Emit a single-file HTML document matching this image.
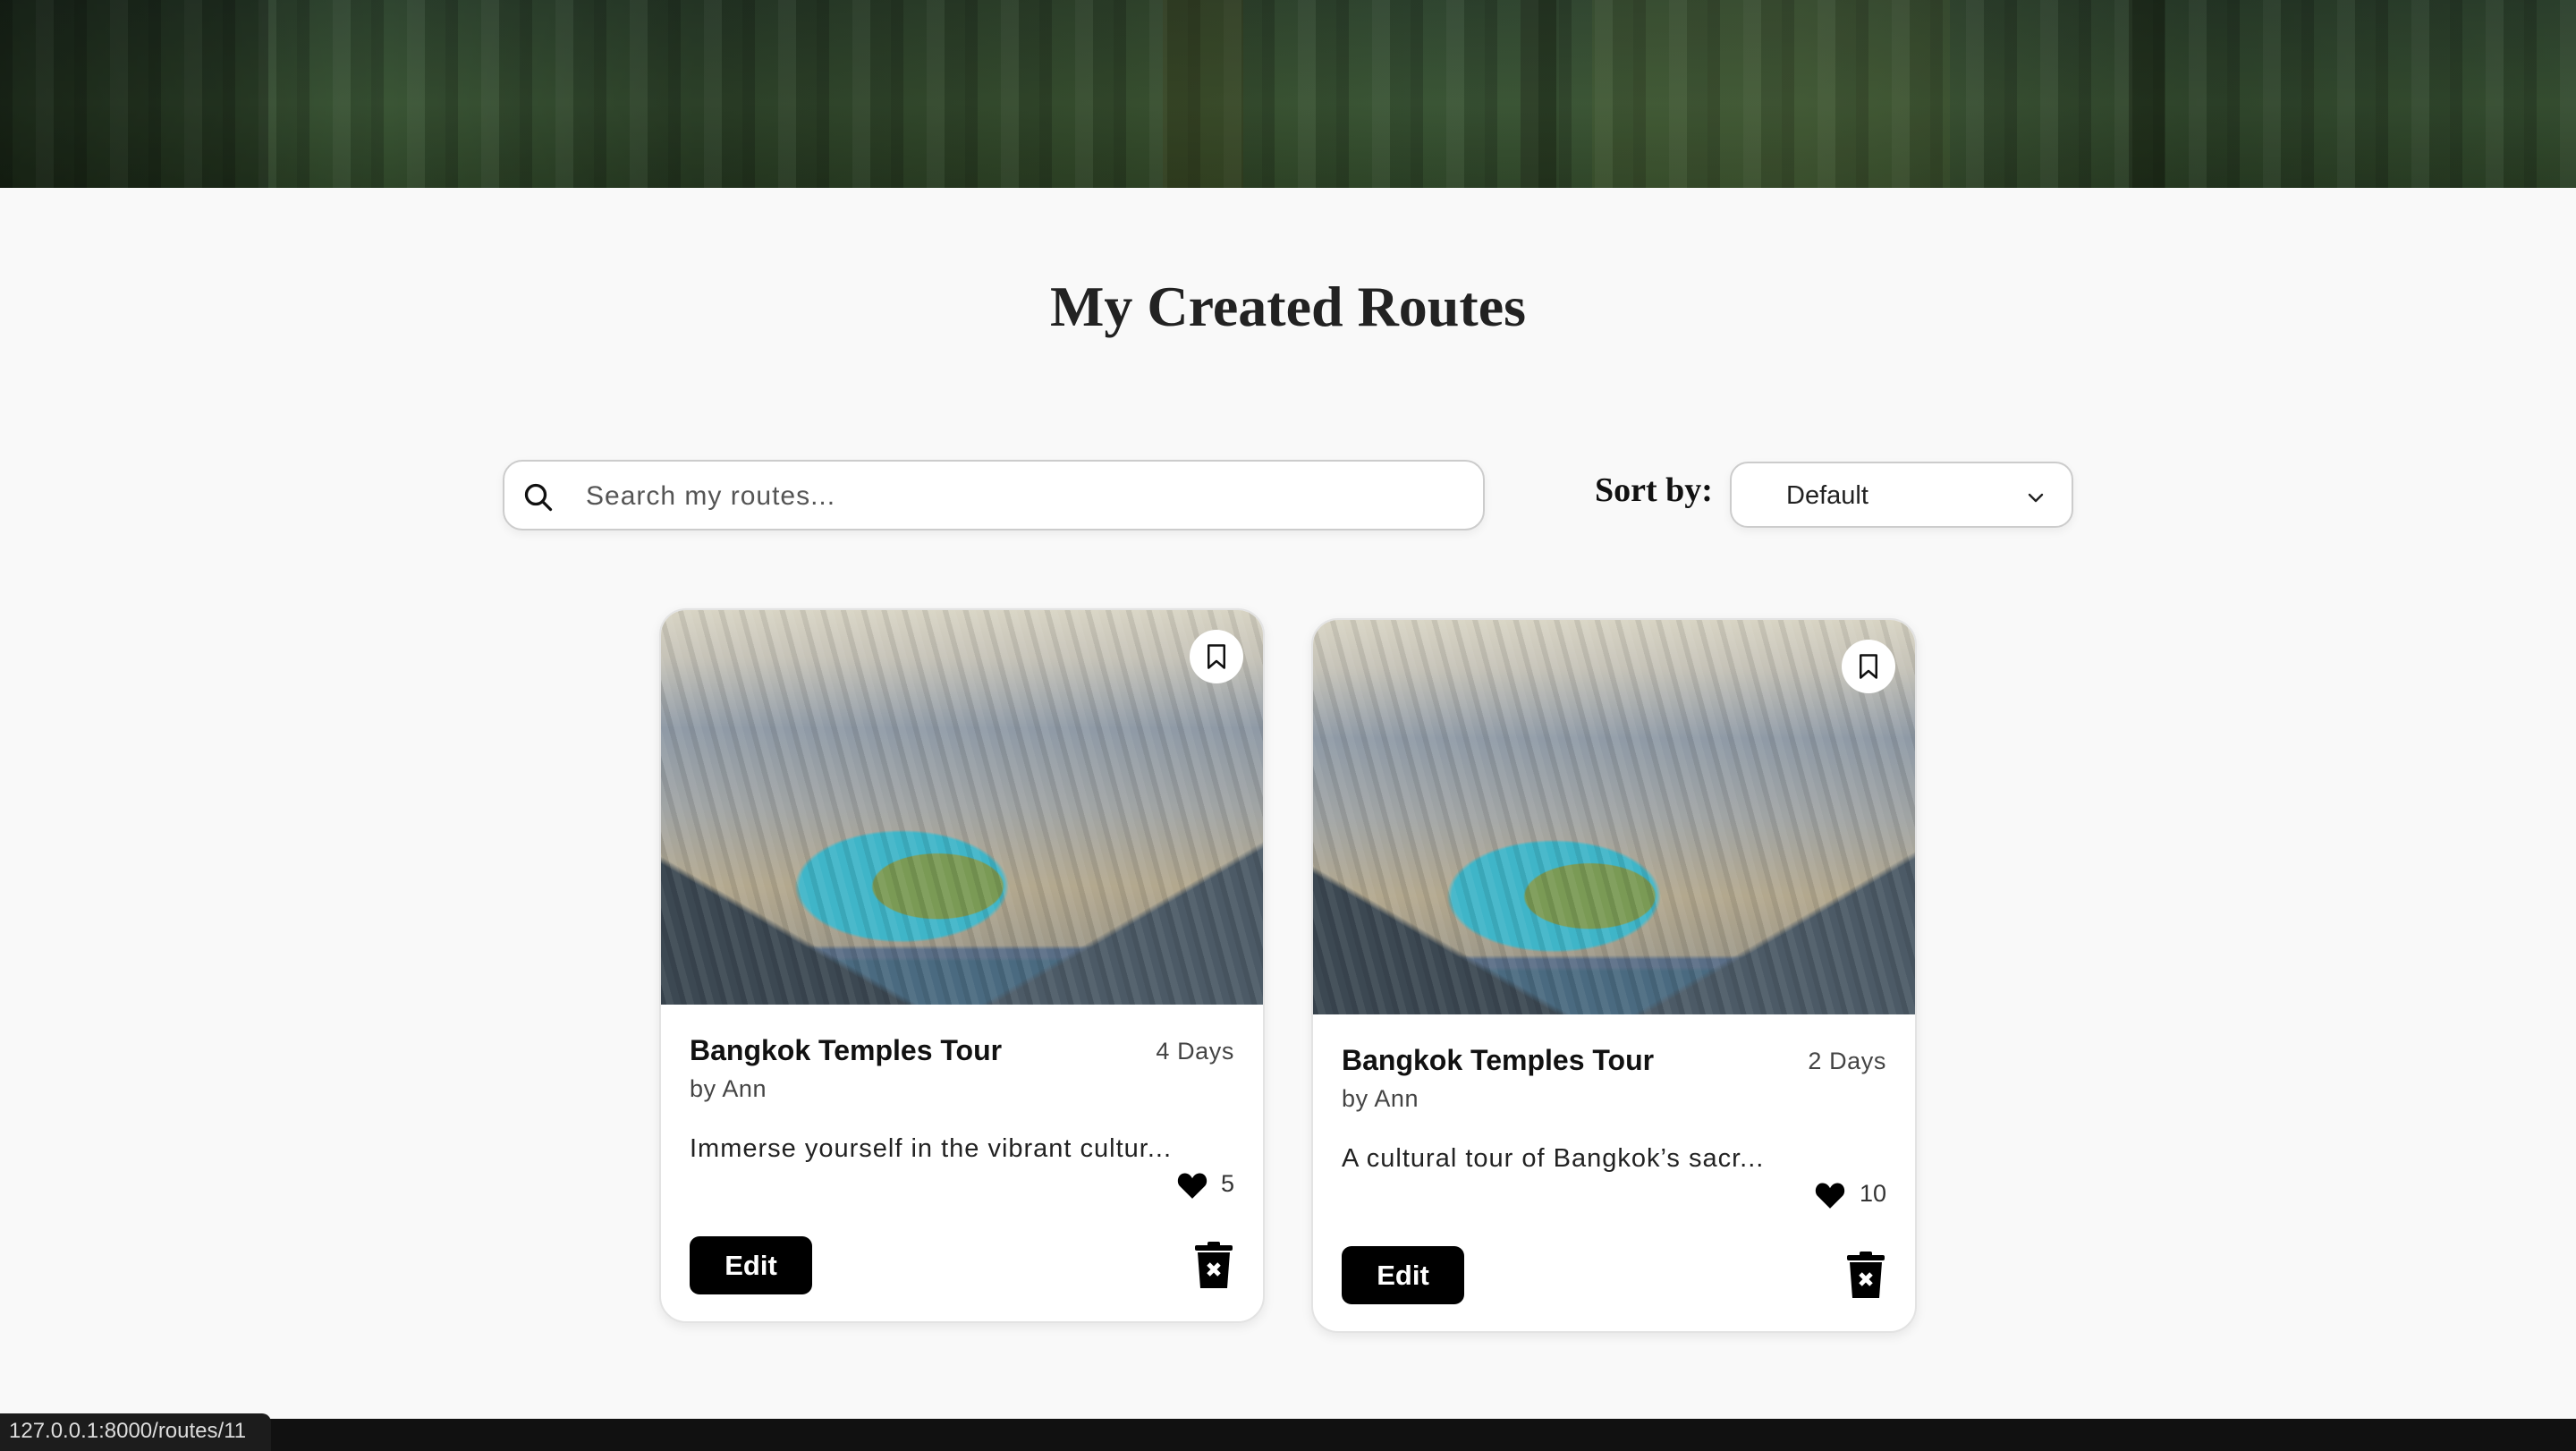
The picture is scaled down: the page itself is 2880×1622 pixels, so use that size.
<!DOCTYPE html>
<html><head><meta charset="utf-8"><style>
*{box-sizing:border-box;margin:0;padding:0}
body{width:2880px;height:1622px;background:#f9f9f9;position:relative;overflow:hidden;font-family:"Liberation Sans",sans-serif;color:#111}
.hero{position:absolute;left:0;top:0;width:2880px;height:210px;
background:
repeating-linear-gradient(90deg,rgba(0,0,0,.18) 0 14px,rgba(0,0,0,0) 14px 40px,rgba(255,255,255,.04) 40px 60px,rgba(0,0,0,.1) 60px 83px),
linear-gradient(90deg,rgba(0,0,0,.35) 0%,rgba(0,0,0,0) 15%,rgba(0,0,0,.25) 27%,rgba(40,50,20,.2) 45%,rgba(0,0,0,0) 55%,rgba(80,90,60,.15) 70%,rgba(0,0,0,.2) 85%,rgba(0,0,0,.1) 100%),
linear-gradient(180deg,#2f4530 0%,#3a5535 55%,#2e4528 100%);}
.hero i{position:absolute;top:0;height:210px;display:block}
h1{position:absolute;left:0;width:2880px;top:306px;text-align:center;font-family:"Liberation Serif",serif;font-weight:bold;font-size:64px;color:#222}
.search{position:absolute;left:562px;top:514px;width:1098px;height:79px;background:#fff;border:2px solid #ccc;border-radius:22px;box-shadow:0 4px 10px rgba(0,0,0,.06)}
.search span{position:absolute;left:91px;top:22px;font-size:30px;color:#555;letter-spacing:1px}
.sortl{position:absolute;left:1783px;top:526px;font-family:"Liberation Serif",serif;font-weight:bold;font-size:38px;color:#111}
.sel{position:absolute;left:1934px;top:516px;width:384px;height:74px;background:#fff;border:2px solid #ccc;border-radius:20px;box-shadow:0 4px 10px rgba(0,0,0,.06)}
.sel span{position:absolute;left:61px;top:20px;font-size:29px;color:#222}
.card{position:absolute;width:677px;height:799px;background:#fff;border:2px solid #e3e3e3;border-radius:30px;overflow:hidden;box-shadow:0 4px 12px rgba(0,0,0,.08)}
.img{position:absolute;left:0;top:0;width:100%;height:441px;
background:
repeating-linear-gradient(75deg,rgba(0,0,0,.08) 0 6px,rgba(255,255,255,.06) 6px 14px,rgba(0,0,0,0) 14px 22px),
radial-gradient(ellipse 120px 60px at 46% 70%,#7a9a55 0 60%,transparent 62%),
radial-gradient(ellipse 190px 100px at 40% 70%,#3fb5c8 0 60%,transparent 63%),
linear-gradient(150deg,transparent 0 78%,#4c5a66 79% 100%),
linear-gradient(210deg,transparent 0 80%,#3c4852 81% 100%),
linear-gradient(180deg,transparent 0 85%,#5a6e86 86% 88%,#4a6a80 89% 100%),
linear-gradient(180deg,#d8d4c4 0%,#c6c3b8 12%,#8f9aa6 30%,#a0a4a4 50%,#b3a88e 70%,#8c8c86 100%);}
.bm{position:absolute;right:22px;top:22px;width:60px;height:60px;border-radius:50%;background:#fff}
.title{position:absolute;left:32px;font-size:32px;font-weight:bold;color:#111}
.days{position:absolute;right:32px;font-size:27px;color:#444;letter-spacing:.6px}
.by{position:absolute;left:32px;font-size:27px;color:#444;letter-spacing:.6px}
.desc{position:absolute;left:32px;font-size:29px;color:#222;letter-spacing:1px}
.likes{position:absolute;right:32px;font-size:27px;color:#333}
.edit{position:absolute;left:32px;width:137px;height:65px;background:#000;color:#fff;border-radius:11px;font-weight:bold;font-size:31px;text-align:center;line-height:65px}
.bar{position:absolute;left:0;top:1586px;width:2880px;height:36px;background:#111}
.tip{position:absolute;left:0;top:1580px;width:303px;height:42px;background:#1c1c1c;border-top-right-radius:10px;color:#ddd;font-size:24px;padding:6px 0 0 10px}
</style></head><body>
<div class="hero">
<i style="left:0;width:300px;background:rgba(0,0,0,.25)"></i>
<i style="left:1300px;width:90px;background:rgba(60,55,20,.25)"></i>
<i style="left:1700px;width:40px;background:rgba(15,20,10,.35)"></i>
<i style="left:2380px;width:40px;background:rgba(15,20,10,.35)"></i>
<i style="left:1780px;width:400px;background:rgba(110,120,60,.12)"></i>
</div>
<h1>My Created Routes</h1>
<div class="search">
<svg style="position:absolute;left:20px;top:22px" width="36" height="36" viewBox="0 0 24 24" fill="none" stroke="#111" stroke-width="2.2" stroke-linecap="round"><circle cx="10" cy="10" r="7"/><path d="M15.5 15.5L21 21"/></svg>
<span>Search my routes...</span></div>
<div class="sortl">Sort by:</div>
<div class="sel"><span>Default</span>
<svg style="position:absolute;right:28px;top:26px" width="24" height="24" viewBox="0 0 24 24" fill="none" stroke="#222" stroke-width="2.4" stroke-linecap="round" stroke-linejoin="round"><path d="M5 9l7 7 7-7"/></svg></div>

<div class="card" style="left:737px;top:680px">
<div class="img"></div>
<div class="bm"><svg style="position:absolute;left:17px;top:15px" width="26" height="30" viewBox="0 0 20 24" fill="none" stroke="#111" stroke-width="2" stroke-linejoin="round"><path d="M3 2h14v20l-7-6-7 6z"/></svg></div>
<div class="title" style="top:474px">Bangkok Temples Tour</div>
<div class="days" style="top:478px">4 Days</div>
<div class="by" style="top:520px">by Ann</div>
<div class="desc" style="top:586px">Immerse yourself in the vibrant cultur...</div>
<svg style="position:absolute;right:62px;top:628px" width="34" height="30" viewBox="0 0 24 21"><path d="M12 21L2 11C-1 7.5 1 1 6 1c3 0 5 2 6 4 1-2 3-4 6-4 5 0 7 6.5 4 10z" fill="#000"/></svg>
<div class="likes" style="top:626px">5</div>
<div class="edit" style="top:700px">Edit</div>
<svg style="position:absolute;right:32px;top:706px" width="46" height="54" viewBox="0 0 46 54"><rect x="2" y="4" width="42" height="6" rx="2" fill="#000"/><rect x="16" y="0" width="14" height="6" rx="2" fill="#000"/><path d="M5 12h36l-3 40H8z" fill="#000"/><path d="M17 25l12 12M29 25L17 37" stroke="#fff" stroke-width="5"/></svg>
</div>

<div class="card" style="left:1466px;top:691px">
<div class="img"></div>
<div class="bm"><svg style="position:absolute;left:17px;top:15px" width="26" height="30" viewBox="0 0 20 24" fill="none" stroke="#111" stroke-width="2" stroke-linejoin="round"><path d="M3 2h14v20l-7-6-7 6z"/></svg></div>
<div class="title" style="top:474px">Bangkok Temples Tour</div>
<div class="days" style="top:478px">2 Days</div>
<div class="by" style="top:520px">by Ann</div>
<div class="desc" style="top:586px">A cultural tour of Bangkok’s sacr...</div>
<svg style="position:absolute;right:78px;top:628px" width="34" height="30" viewBox="0 0 24 21"><path d="M12 21L2 11C-1 7.5 1 1 6 1c3 0 5 2 6 4 1-2 3-4 6-4 5 0 7 6.5 4 10z" fill="#000"/></svg>
<div class="likes" style="top:626px">10</div>
<div class="edit" style="top:700px">Edit</div>
<svg style="position:absolute;right:32px;top:706px" width="46" height="54" viewBox="0 0 46 54"><rect x="2" y="4" width="42" height="6" rx="2" fill="#000"/><rect x="16" y="0" width="14" height="6" rx="2" fill="#000"/><path d="M5 12h36l-3 40H8z" fill="#000"/><path d="M17 25l12 12M29 25L17 37" stroke="#fff" stroke-width="5"/></svg>
</div>

<div class="bar"></div>
<div class="tip">127.0.0.1:8000/routes/11</div>
</body></html>
